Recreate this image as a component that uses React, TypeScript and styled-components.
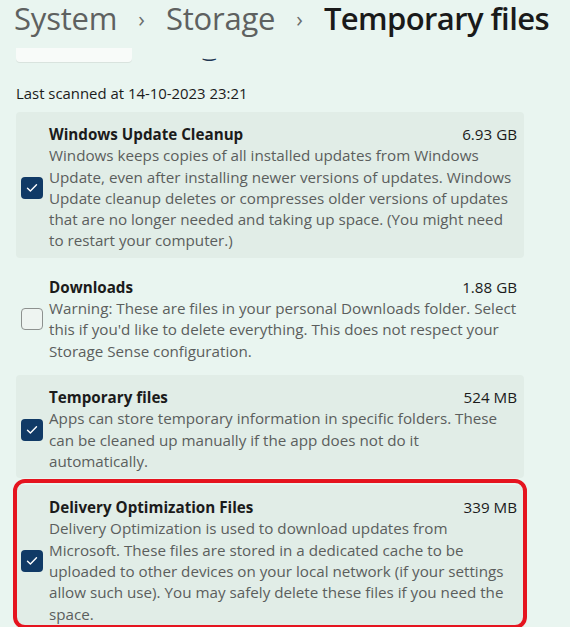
import styled, { createGlobalStyle } from 'styled-components'

type Item = {
	title: string
	size: string
	lines: string[]
	checked: boolean
	filled: boolean
	highlighted?: boolean
}

const items: Item[] = [
	{
		title: 'Windows Update Cleanup',
		size: '6.93 GB',
		checked: true,
		filled: true,
		lines: [
			'Windows keeps copies of all installed updates from Windows',
			'Update, even after installing newer versions of updates. Windows',
			'Update cleanup deletes or compresses older versions of updates',
			'that are no longer needed and taking up space. (You might need',
			'to restart your computer.)',
		],
	},
	{
		title: 'Downloads',
		size: '1.88 GB',
		checked: false,
		filled: false,
		lines: [
			'Warning: These are files in your personal Downloads folder. Select',
			"this if you'd like to delete everything. This does not respect your",
			'Storage Sense configuration.',
		],
	},
	{
		title: 'Temporary files',
		size: '524 MB',
		checked: true,
		filled: true,
		lines: [
			'Apps can store temporary information in specific folders. These',
			'can be cleaned up manually if the app does not do it',
			'automatically.',
		],
	},
	{
		title: 'Delivery Optimization Files',
		size: '339 MB',
		checked: true,
		filled: true,
		highlighted: true,
		lines: [
			'Delivery Optimization is used to download updates from',
			'Microsoft. These files are stored in a dedicated cache to be',
			'uploaded to other devices on your local network (if your settings',
			'allow such use). You may safely delete these files if you need the',
			'space.',
		],
	},
]

const CheckMark = () => (
	<svg width="12" height="10" viewBox="0 0 12 10" fill="none">
		<path d="M1.5 5.2 4.4 8 10.5 1.8" stroke="#fff" strokeWidth="1.4" strokeLinecap="round" strokeLinejoin="round" />
	</svg>
)

const App = (): JSX.Element => (
	<>
		<GlobalStyle />
		<Page>
			<Breadcrumb>
				<Crumb>System</Crumb>
				<Chevron>›</Chevron>
				<Crumb>Storage</Crumb>
				<Chevron>›</Chevron>
				<Crumb current>Temporary files</Crumb>
			</Breadcrumb>
			<ScrolledRow>
				<ScrolledButton />
				<Undertie>‿</Undertie>
			</ScrolledRow>
			<ScanNote>Last scanned at 14-10-2023 23:21</ScanNote>
			<List>
				{items.map((item) => (
					<Card key={item.title} filled={item.filled} highlighted={item.highlighted}>
						<CheckBox checked={item.checked}>{item.checked && <CheckMark />}</CheckBox>
						<Body>
							<TitleRow>
								<Title>{item.title}</Title>
								<Size>{item.size}</Size>
							</TitleRow>
							<Description>{item.lines.join('\n')}</Description>
						</Body>
					</Card>
				))}
			</List>
		</Page>
	</>
)

export default App

const GlobalStyle = createGlobalStyle`
	html, body {
		margin: 0;
		overflow: hidden;
		background: #e9f5f0;
	}

	body {
		font-family: 'Open Sans', 'Noto Sans', sans-serif;
		color: #1b1b1b;
	}
`

const Page = styled.div`
	width: 570px;
	height: 627px;
	overflow: hidden;
	padding-left: 14px;
	box-sizing: border-box;
`

const Breadcrumb = styled.div`
	display: flex;
	align-items: baseline;
	gap: 21px;
	height: 37px;
	font-size: 31px;
	line-height: 37px;
	white-space: nowrap;
`

const Crumb = styled.span<{ current?: boolean }>`
	color: ${(p) => (p.current ? '#1a1a1a' : '#5e6160')};
	font-weight: ${(p) => (p.current ? 600 : 400)};
	letter-spacing: ${(p) => (p.current ? '-0.6px' : '-0.2px')};
`

const Chevron = styled.span`
	color: #6b6e6d;
	font-size: 22px;
	position: relative;
	top: -3px;
`

const ScrolledRow = styled.div`
	display: flex;
	align-items: flex-end;
	height: 25px;
`

const ScrolledButton = styled.div`
	width: 116px;
	height: 14px;
	margin-left: 2px;
	background: #f8fbf9;
	border-radius: 0 0 4px 4px;
	box-shadow: 0 1px 0 #d9e3de;
`

const Undertie = styled.span`
	margin-left: 71px;
	margin-bottom: 2px;
	font-family: 'DejaVu Sans', sans-serif;
	font-size: 15px;
	font-weight: 700;
	line-height: 14px;
	color: #1f3552;
`

const ScanNote = styled.div`
	margin-top: 21px;
	margin-left: 2px;
	font-size: 14.9px;
	line-height: 20px;
	color: #1b1b1b;
`

const List = styled.div`
	display: flex;
	flex-direction: column;
	gap: 7px;
	margin-top: 9px;
	margin-left: 2px;
	width: 508px;
`

const Card = styled.div<{ filled: boolean; highlighted?: boolean }>`
	position: relative;
	display: flex;
	align-items: center;
	gap: 6px;
	padding: 12px 7px 6px 5px;
	border-radius: 4px;
	background: ${(p) => (p.filled ? '#e1ede7' : 'transparent')};

	${(p) =>
		p.highlighted &&
		`
		&::after {
			content: '';
			position: absolute;
			top: -6px;
			left: -3px;
			right: -3px;
			bottom: 2px;
			border: 4px solid #e5141f;
			border-radius: 12px;
			pointer-events: none;
		}
	`}
`

const CheckBox = styled.div<{ checked: boolean }>`
	flex: none;
	display: flex;
	align-items: center;
	justify-content: center;
	width: 22px;
	height: 22px;
	box-sizing: border-box;
	border-radius: 4px;
	background: ${(p) => (p.checked ? '#103a66' : '#eef4f1')};
	border: ${(p) => (p.checked ? 'none' : '1px solid #8d918f')};
`

const Body = styled.div`
	flex: 1;
	min-width: 0;
`

const TitleRow = styled.div`
	display: flex;
	justify-content: space-between;
	align-items: baseline;
	line-height: 21.3px;
`

const Title = styled.div`
	font-size: 15.2px;
	font-weight: 700;
	color: #1b1b1b;
`

const Size = styled.div`
	font-size: 15.2px;
	color: #1b1b1b;
`

const Description = styled.div`
	font-size: 15.2px;
	line-height: 21.3px;
	color: #5b5e5d;
	white-space: pre;
`
